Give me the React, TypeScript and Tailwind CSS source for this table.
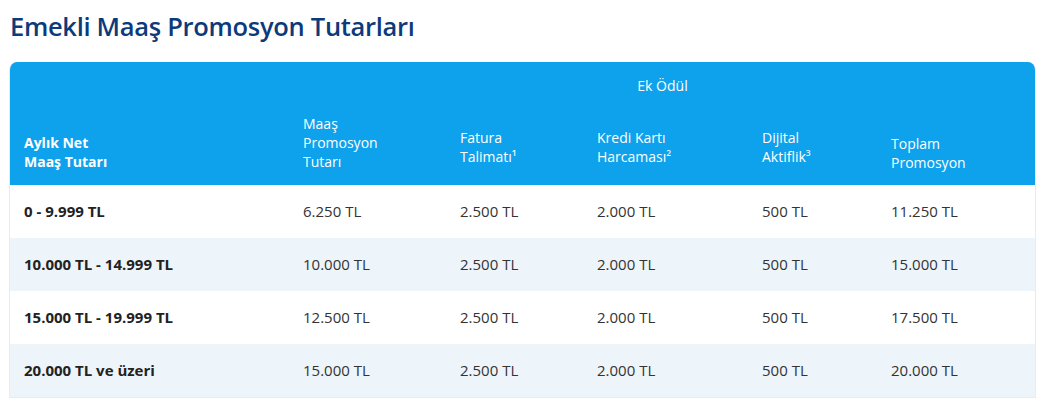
import React from 'react';

const rows = [
  ['0 - 9.999 TL', '6.250 TL', '2.500 TL', '2.000 TL', '500 TL', '11.250 TL'],
  ['10.000 TL - 14.999 TL', '10.000 TL', '2.500 TL', '2.000 TL', '500 TL', '15.000 TL'],
  ['15.000 TL - 19.999 TL', '12.500 TL', '2.500 TL', '2.000 TL', '500 TL', '17.500 TL'],
  ['20.000 TL ve üzeri', '15.000 TL', '2.500 TL', '2.000 TL', '500 TL', '20.000 TL'],
];

export default function App() {
  return (
    <div className="w-[1051px] h-[410px] bg-white pl-[9px] pr-[15px] pt-[9px] font-['Open_Sans',sans-serif]">
      <h1 className="text-[25.5px] leading-[34px] font-semibold text-[#0c3a7a] pl-px tracking-[-0.3px]">
        Emekli Maaş Promosyon Tutarları
      </h1>

      <div className="mt-[19px] rounded-t-[8px] overflow-hidden border-x border-b border-[#e6ecf2]">
        <table className="w-full border-collapse text-[14px] text-[#333]">
          <colgroup>
            <col className="w-[280px]" />
            <col className="w-[158px]" />
            <col className="w-[137px]" />
            <col className="w-[164px]" />
            <col className="w-[129px]" />
            <col />
          </colgroup>
          <thead className="bg-[#0ea1ec] text-white">
            <tr>
              <th rowSpan={2} className="align-bottom text-left font-bold pl-[14px] pb-[14px] leading-[19px]">
                Aylık Net
                <br />
                Maaş Tutarı
              </th>
              <th colSpan={5} className="h-[44px] pt-[2px] font-normal text-center">
                Ek Ödül
              </th>
            </tr>
            <tr className="h-[79px] text-left font-normal leading-[19px]">
              <th className="font-normal pl-[13px] pb-[6px]">
                Maaş
                <br />
                Promosyon
                <br />
                Tutarı
              </th>
              <th className="font-normal pl-[12px] pt-[2px]">
                Fatura
                <br />
                Talimatı¹
              </th>
              <th className="font-normal pl-[12px] pt-[2px]">
                Kredi Kartı
                <br />
                Harcaması²
              </th>
              <th className="font-normal pl-[13px] pt-[2px]">
                Dijital
                <br />
                Aktiflik³
              </th>
              <th className="font-normal pl-[13px] pt-[14px]">
                Toplam
                <br />
                Promosyon
              </th>
            </tr>
          </thead>
          <tbody className="text-[15px]">
            {rows.map((r, i) => (
              <tr key={i} className={i % 2 === 1 ? 'bg-[#edf4fa] h-[53px]' : 'bg-white h-[53px]'}>
                <td className="pl-[14px] font-bold text-[#222]">{r[0]}</td>
                <td className="pl-[13px]">{r[1]}</td>
                <td className="pl-[12px]">{r[2]}</td>
                <td className="pl-[12px]">{r[3]}</td>
                <td className="pl-[13px]">{r[4]}</td>
                <td className="pl-[13px]">{r[5]}</td>
              </tr>
            ))}
          </tbody>
        </table>
      </div>
    </div>
  );
}
